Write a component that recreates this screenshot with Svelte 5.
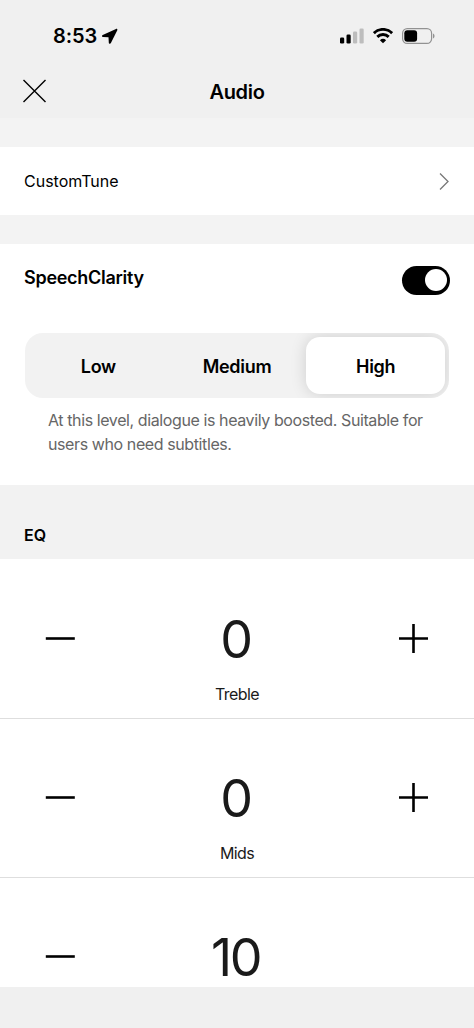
<script lang="ts">
	type Band = {
		name?: string;
		value: number;
	};

	const levels = ['Low', 'Medium', 'High'];
	const MAX = 10;
	const MIN = -10;

	let level = $state('High');
	let speechClarity = $state(true);
	let bands: Band[] = $state([
		{ name: 'Treble', value: 0 },
		{ name: 'Mids', value: 0 },
		{ value: 10 }
	]);
</script>

<div class="screen">
	<header>
		<div class="status">
			<div class="clock">
				<span class="time">8:53</span>
				<svg width="17" height="17" viewBox="0 0 17 17">
					<path
						d="M15 .9 1.700 6.900c-1.100.5-.9 1.900.3 2l5.500.3.300 5.600c.1 1.200 1.600 1.400 2.100.3L16.300 2.200c.4-.9-.4-1.700-1.300-1.300z"
					/>
				</svg>
			</div>
			<div class="indicators">
				<svg class="signal" width="24" height="16" viewBox="0 0 24 16">
					<rect x="0" y="9.500" width="4.200" height="6" rx="1.300" />
					<rect x="6.500" y="6.500" width="4.200" height="9" rx="1.300" />
					<rect class="dim" x="13" y="3.500" width="4.200" height="12" rx="1.300" />
					<rect class="dim" x="19.500" y="0.500" width="4.200" height="15" rx="1.300" />
				</svg>
				<svg class="wifi" width="20" height="16" viewBox="0 0 20 16">
					<path class="arc" d="M.9 5.100a13 13 0 0 1 18.200 0" />
					<path class="arc" d="M4.300 8.900a8.100 8.100 0 0 1 11.400 0" />
					<path d="M10 15.300 6.900 12.200a4.500 4.500 0 0 1 6.200 0z" />
				</svg>
				<svg class="battery" width="33" height="16" viewBox="0 0 33 16">
					<rect class="shell" x="0.600" y="0.600" width="29" height="14.800" rx="4.600" />
					<rect x="2.300" y="2.300" width="12.800" height="11.400" rx="3" />
					<path class="cap" d="M31 5.500c2 .8 2 4.200 0 5z" />
				</svg>
			</div>
		</div>
		<div class="titlebar">
			<button class="close" aria-label="Close">
				<svg width="24" height="24" viewBox="0 0 24 24">
					<path d="M.5 1l22 22M22.500 1L.5 23" />
				</svg>
			</button>
			<h1>Audio</h1>
		</div>
	</header>

	<main>
		<button class="row">
			<span>CustomTune</span>
			<svg width="10" height="18" viewBox="0 0 10 18">
				<path d="M1 1.500l8 8-8 8" />
			</svg>
		</button>

		<section class="clarity">
			<div class="clarity-head">
				<h2>SpeechClarity</h2>
				<button
					class="toggle"
					class:on={speechClarity}
					role="switch"
					aria-checked={speechClarity}
					aria-label="SpeechClarity"
					onclick={() => (speechClarity = !speechClarity)}
				>
					<span class="knob"></span>
				</button>
			</div>
			<div class="segments">
				{#each levels as name}
					<button class="segment" class:active={level === name} onclick={() => (level = name)}>
						{name}
					</button>
				{/each}
			</div>
			<p>
				At this level, dialogue is heavily boosted. Suitable for<br />users who need subtitles.
			</p>
		</section>

		<h3>EQ</h3>

		{#each bands as band}
			<div class="band">
				<div class="controls">
					{#if band.value > MIN}
						<button class="step" aria-label="Decrease" onclick={() => band.value--}>
							<svg width="30" height="30" viewBox="0 0 30 30"><path d="M.800 14.500h29" /></svg>
						</button>
					{/if}
					<span class="value">{band.value}</span>
					{#if band.value < MAX}
						<button class="step" aria-label="Increase" onclick={() => band.value++}>
							<svg width="30" height="30" viewBox="0 0 30 30">
								<path d="M0 14.500h29M14.500 0v29" />
							</svg>
						</button>
					{/if}
				</div>
				{#if band.name}
					<div class="name">{band.name}</div>
				{/if}
			</div>
		{/each}
	</main>

	<footer></footer>
</div>

<style>
	:global(body) {
		background: #f0f0f0;
	}
	.screen {
		display: flex;
		flex-direction: column;
		height: 1028px;
		overflow: hidden;
		font-family: Inter, 'Liberation Sans', sans-serif;
		color: #000;
	}
	button {
		border: 0;
		padding: 0;
		background: none;
		font: inherit;
		color: inherit;
	}
	svg {
		display: block;
	}
	h1,
	h2,
	h3,
	p {
		margin: 0;
	}
	header {
		flex: none;
		height: 118px;
		background: #f0f0f0;
	}
	.status {
		display: flex;
		justify-content: space-between;
		align-items: center;
		height: 24px;
		padding: 24px 39px 0 53px;
	}
	.clock,
	.indicators {
		display: flex;
		align-items: center;
	}
	.clock {
		gap: 4px;
	}
	.time {
		font-size: 20px;
		font-weight: 600;
		letter-spacing: -0.1px;
	}
	.indicators {
		gap: 9px;
	}
	.dim {
		fill: #bdbdbd;
	}
	.arc {
		fill: none;
		stroke: #000;
		stroke-width: 2.9;
	}
	.shell {
		fill: none;
		stroke: #929292;
		stroke-width: 1.2;
	}
	.cap {
		fill: #929292;
	}
	.titlebar {
		display: grid;
		grid-template-columns: 24px 1fr 24px;
		align-items: center;
		height: 38px;
		margin-top: 24px;
		padding: 0 23px;
	}
	.close path {
		fill: none;
		stroke: #000;
		stroke-width: 1.4;
	}
	h1 {
		padding-top: 1px;
		font-size: 20px;
		font-weight: 600;
		letter-spacing: -0.3px;
		text-align: center;
	}
	main {
		flex: 1;
		min-height: 0;
		overflow: hidden;
		padding-top: 29px;
		background: #f3f3f3;
	}
	.row {
		display: flex;
		justify-content: space-between;
		align-items: center;
		width: 100%;
		height: 68px;
		padding: 0 25px 0 24px;
		background: #fff;
		font-size: 16px;
	}
	.row path {
		fill: none;
		stroke: #777;
		stroke-width: 1.3;
	}
	.clarity {
		height: 220px;
		margin-top: 29px;
		padding: 21px 24px 0;
		background: #fff;
	}
	.clarity-head {
		display: flex;
		justify-content: space-between;
		align-items: flex-start;
		height: 68px;
	}
	h2 {
		font-size: 18px;
		font-weight: 600;
		line-height: 26px;
		letter-spacing: -0.28px;
	}
	.toggle {
		display: flex;
		align-items: center;
		width: 48.5px;
		height: 29px;
		margin-top: 0.5px;
		padding: 0 3.5px;
		border-radius: 15px;
		background: #999;
	}
	.toggle.on {
		justify-content: flex-end;
		background: #000;
	}
	.knob {
		width: 22px;
		height: 22px;
		border-radius: 50%;
		background: #fff;
	}
	.segments {
		display: flex;
		height: 57px;
		margin: 0 1px;
		padding: 4px;
		border-radius: 18px;
		background: #f2f2f2;
		overflow: hidden;
	}
	.segment {
		flex: 1;
		padding-top: 1px;
		border-radius: 14px;
		font-size: 18px;
		font-weight: 600;
		letter-spacing: -0.3px;
	}
	.segment.active {
		background: #fff;
		box-shadow: 0 0 16px rgba(0, 0, 0, 0.15);
	}
	p {
		margin: 10px 0 0 24px;
		font-size: 16px;
		line-height: 24px;
		letter-spacing: -0.4px;
		color: #666;
		white-space: nowrap;
	}
	h3 {
		height: 34px;
		padding: 40px 24px 0;
		background: #f2f2f2;
		font-size: 16px;
		font-weight: 600;
		line-height: 20px;
	}
	.band {
		height: 158px;
		border-bottom: 1px solid #dedede;
		background: #fff;
	}
	h3 + .band {
		padding-top: 1px;
	}
	.controls {
		display: grid;
		grid-template-columns: 30px 1fr 30px;
		align-items: center;
		height: 60px;
		padding: 50px 45px 0;
	}
	.step path {
		fill: none;
		stroke: #000;
		stroke-width: 2.6;
	}
	.step svg {
		margin: -2px 0 1px;
	}
	.value {
		font-size: 52px;
		line-height: 52px;
		text-align: center;
		letter-spacing: -2.5px;
		text-indent: -3px;
		color: #1a1a1a;
	}
	.name {
		margin-top: 14px;
		font-size: 16px;
		line-height: 20px;
		text-align: center;
		letter-spacing: -0.6px;
		color: #1a1a1a;
	}
	footer {
		flex: none;
		height: 41px;
		background: #f0f0f0;
	}
</style>
